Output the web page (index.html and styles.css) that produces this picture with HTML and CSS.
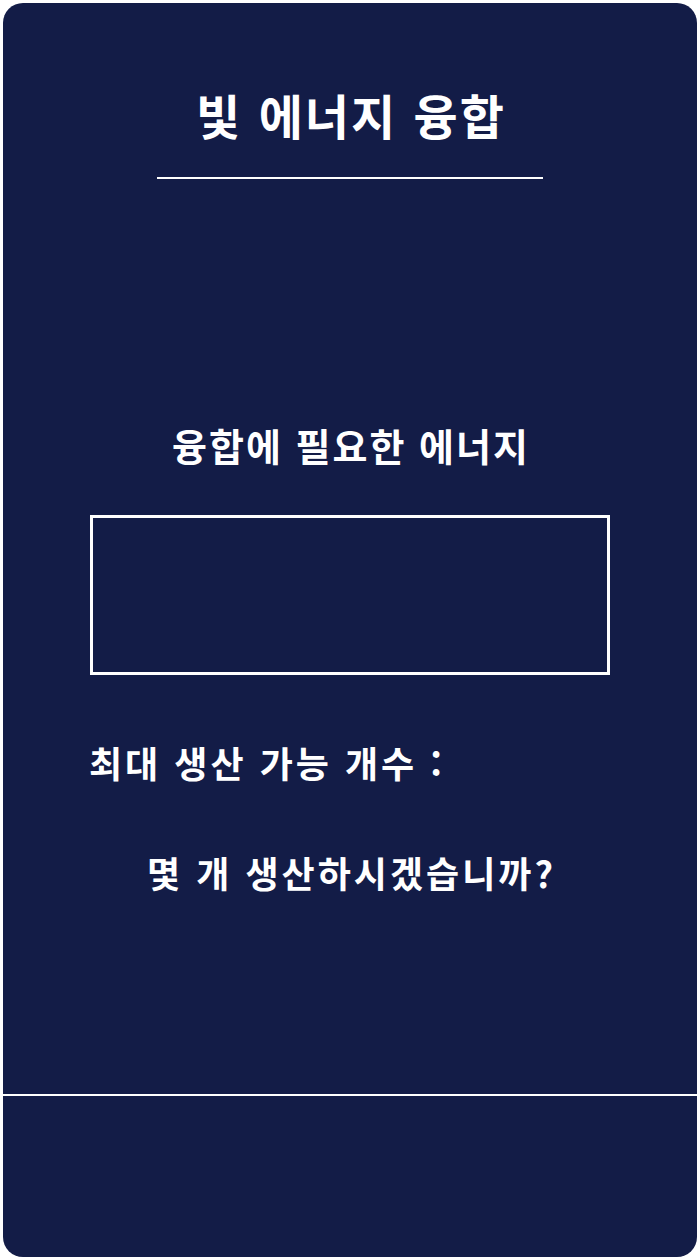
FILE: index.html
```html
<!DOCTYPE html>
<html lang="ko">
<head>
<meta charset="UTF-8">
<link rel="stylesheet" href="styles.css">
</head>
<body>
<div class="panel">
  <h1 class="title">빛 에너지 융합</h1>
  <div class="title_line"></div>
  <h2 class="need_label">융합에 필요한 에너지</h2>
  <div class="energy_box"></div>
  <p class="max_count">최대 생산 가능 개수 :</p>
  <p class="question">몇 개 생산하시겠습니까?</p>
  <div class="bottom_line"></div>
</div>
</body>
</html>
```
FILE: styles.css
```css
body {
  margin: 0;
  background-color: #ffffff;
  font-family: "Noto Sans CJK KR", "Noto Sans", sans-serif;
}

.panel {
  margin: 3px;
  height: 1254px;
  border-radius: 20px;
  background: #131c47;
  color: #ffffff;
  display: flex;
  flex-direction: column;
  align-items: center;
  box-sizing: border-box;
  padding-top: 79px;
}

.title {
  margin: 0;
  font-size: 48px;
  font-weight: bold;
  line-height: 64px;
  letter-spacing: 2px;
  word-spacing: 1px;
  padding-left: 2px;
}

.title_line {
  width: 386px;
  height: 2px;
  background: #ffffff;
  margin-top: 31px;
}

.need_label {
  margin: 241px 0 0 0;
  font-size: 38px;
  font-weight: bold;
  line-height: 50px;
  letter-spacing: 2px;
  padding-left: 2px;
}

.energy_box {
  width: 520px;
  height: 160px;
  box-sizing: border-box;
  border: 3px solid #ffffff;
  margin-top: 45px;
}

.max_count {
  align-self: flex-start;
  margin: 62px 0 0 86px;
  font-size: 36px;
  font-weight: bold;
  line-height: 50px;
  letter-spacing: 3px;
}

.question {
  margin: 60px 0 0 0;
  font-size: 36px;
  font-weight: bold;
  line-height: 50px;
  letter-spacing: 3px;
  padding-left: 3px;
}

.bottom_line {
  align-self: stretch;
  height: 2px;
  background: #ffffff;
  margin-top: auto;
  margin-bottom: 161px;
}
```
